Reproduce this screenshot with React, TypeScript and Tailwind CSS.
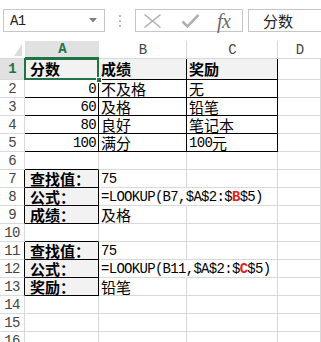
import React from "react";

const LAT = "font-['Liberation_Mono',monospace] text-[14px] leading-[16px] tracking-[-0.7px]";
const CJK = "font-['Noto_Sans_CJK_SC',sans-serif] text-[15px] leading-[16px]";

function Txt({ s }: { s: string }) {
  const parts = s.split(/([\x20-\x7e]+)/).filter((p) => p.length > 0);
  return (
    <>
      {parts.map((p, i) =>
        /^[\x20-\x7e]+$/.test(p) ? (
          <span key={i} className={LAT}>
            {p}
          </span>
        ) : (
          <span key={i} className={CJK}>
            {p}
          </span>
        )
      )}
    </>
  );
}

type Cell = {
  c?: React.ReactNode;
  right?: boolean;
  bold?: boolean;
  fill?: boolean;
  rb?: boolean;
  bb?: boolean;
  noR?: boolean;
  overflow?: boolean;
  sel?: boolean;
};

type Row = { n: number; h: string; hb?: boolean; cells: Cell[] };

const t = (s: string) => <Txt s={s} />;

const formula = (a: string, red: string, b: string) => (
  <>
    <span className={LAT}>{a}</span>
    <span className={LAT + " font-bold text-[#e02020]"}>{red}</span>
    <span className={LAT}>{b}</span>
  </>
);

const T = { rb: true, bb: true };

const rows: Row[] = [
  {
    n: 1,
    h: "h-[21px]",
    cells: [
      { c: t("分数"), bold: true, fill: true, ...T, sel: true },
      { c: t("成绩"), bold: true, fill: true, ...T },
      { c: t("奖励"), bold: true, fill: true, ...T },
      {},
    ],
  },
  { n: 2, h: "h-[18px]", cells: [{ c: t("0"), right: true, ...T }, { c: t("不及格"), ...T }, { c: t("无"), ...T }, {}] },
  { n: 3, h: "h-[18px]", cells: [{ c: t("60"), right: true, ...T }, { c: t("及格"), ...T }, { c: t("铅笔"), ...T }, {}] },
  { n: 4, h: "h-[18px]", cells: [{ c: t("80"), right: true, ...T }, { c: t("良好"), ...T }, { c: t("笔记本"), ...T }, {}] },
  { n: 5, h: "h-[18px]", cells: [{ c: t("100"), right: true, ...T }, { c: t("满分"), ...T }, { c: t("100元"), ...T }, {}] },
  { n: 6, h: "h-[18px]", cells: [{ bb: true }, {}, {}, {}] },
  { n: 7, h: "h-[18px]", hb: true, cells: [{ c: t("查找值："), bold: true, fill: true, ...T }, { c: t("75") }, {}, {}] },
  {
    n: 8,
    h: "h-[18px]",
    hb: true,
    cells: [{ c: t("公式："), bold: true, fill: true, ...T }, { c: formula("=LOOKUP(B7,$A$2:$", "B", "$5)"), noR: true, overflow: true }, {}, {}],
  },
  { n: 9, h: "h-[18px]", hb: true, cells: [{ c: t("成绩："), bold: true, fill: true, ...T }, { c: t("及格") }, {}, {}] },
  { n: 10, h: "h-[18px]", cells: [{ bb: true }, {}, {}, {}] },
  { n: 11, h: "h-[18px]", hb: true, cells: [{ c: t("查找值："), bold: true, fill: true, ...T }, { c: t("75") }, {}, {}] },
  {
    n: 12,
    h: "h-[18px]",
    hb: true,
    cells: [{ c: t("公式："), bold: true, fill: true, ...T }, { c: formula("=LOOKUP(B11,$A$2:$", "C", "$5)"), noR: true, overflow: true }, {}, {}],
  },
  { n: 13, h: "h-[18px]", hb: true, cells: [{ c: t("奖励："), bold: true, fill: true, ...T }, { c: t("铅笔") }, {}, {}] },
  { n: 14, h: "h-[18px]", cells: [{}, {}, {}, {}] },
  { n: 15, h: "h-[18px]", cells: [{}, {}, {}, {}] },
  { n: 16, h: "h-[18px]", cells: [{}, {}, {}, {}] },
];

const widths = ["w-[74px]", "w-[88px]", "w-[91px]", "w-[43px]"];

function CellView({ cell, col }: { cell: Cell; col: number }) {
  const cls = [
    "relative flex items-center shrink-0 border-r border-b whitespace-nowrap overflow-visible",
    widths[col],
    cell.noR ? "border-r-transparent" : cell.rb ? "border-r-black" : "border-r-[#d9d9d9]",
    cell.bb ? "border-b-black" : "border-b-[#d9d9d9]",
    cell.fill ? "bg-[#f2f2f2]" : "",
    cell.right ? "justify-end pr-[2px]" : col === 0 ? "pl-[5px]" : "pl-[2px]",
    cell.bold ? "font-bold" : "",
    cell.overflow ? "z-10" : "",
    "text-black",
  ].join(" ");
  return (
    <div className={cls}>
      {cell.c}
      {cell.sel && (
        <>
          <div className="absolute left-[-1px] top-[-1px] right-[-1px] bottom-[-1px] border-2 border-[#217346] z-20" />
          <div className="absolute right-[-4px] bottom-[-4px] w-[6px] h-[6px] bg-[#217346] border border-white z-30" />
        </>
      )}
    </div>
  );
}

export default function App() {
  return (
    <div className="w-[321px] h-[342px] overflow-hidden bg-white relative select-none">
      {/* Formula bar */}
      <div className="h-[41px] flex items-start pt-[9px]">
        <div className="ml-[3px] w-[102px] h-[23px] border border-[#c6c6c6] flex items-center justify-between pl-[6px] pr-[7px] shrink-0">
          <span className={LAT + " text-[#222]"}>A1</span>
          <svg width="8" height="5" viewBox="0 0 8 5">
            <polygon points="0,0 8,0 4,4.5" fill="#808080" />
          </svg>
        </div>
        <div className="w-[30px] h-[23px] flex flex-col items-center justify-center gap-[3px] shrink-0">
          <div className="w-[2px] h-[2px] bg-[#b8b8b8]" />
          <div className="w-[2px] h-[2px] bg-[#b8b8b8]" />
          <div className="w-[2px] h-[2px] bg-[#b8b8b8]" />
        </div>
        <div className="w-[108px] h-[23px] border border-[#c6c6c6] flex items-center shrink-0">
          <svg width="19" height="16" viewBox="0 0 19 16" className="ml-[7px]">
            <line x1="1.5" y1="1.5" x2="17.5" y2="14.5" stroke="#b0b0b0" strokeWidth="1.6" />
            <line x1="17.5" y1="1.5" x2="1.5" y2="14.5" stroke="#b0b0b0" strokeWidth="1.6" />
          </svg>
          <svg width="19" height="16" viewBox="0 0 19 16" className="ml-[19px]">
            <polyline points="1.5,8.5 6.5,13.5 17.5,2" fill="none" stroke="#b0b0b0" strokeWidth="2.6" />
          </svg>
          <span className="ml-[17px] font-['Liberation_Serif',serif] italic text-[20px] leading-none text-[#6b6b6b] tracking-[-0.5px]">
            fx
          </span>
        </div>
        <div className="ml-[5px] flex-1 h-[23px] border border-[#c6c6c6] border-r-0 flex items-center pl-[14px]">
          <span className={CJK + " text-[#222]"}>分数</span>
        </div>
      </div>

      {/* Column headers */}
      <div className="flex h-[18px]">
        <div className="w-[25px] shrink-0 border-b border-[#d9d9d9] relative">
          <svg width="8" height="12" viewBox="0 0 8 12" className="absolute right-[3px] bottom-[2px]">
            <polygon points="8,0 8,12 0,12" fill="#dcdcdc" />
          </svg>
        </div>
        <div className="w-[74px] shrink-0 bg-[#e1e1e1] border-b-2 border-[#217346] flex items-center justify-center">
          <span className={LAT + " font-bold text-[#217346]"}>A</span>
        </div>
        <div className="w-[88px] shrink-0 border-r border-b border-[#d9d9d9] flex items-center justify-center">
          <span className={LAT + " text-[#444]"}>B</span>
        </div>
        <div className="w-[91px] shrink-0 border-r border-b border-[#d9d9d9] flex items-center justify-center">
          <span className={LAT + " text-[#444]"}>C</span>
        </div>
        <div className="w-[43px] shrink-0 border-b border-[#d9d9d9] flex items-center justify-center">
          <span className={LAT + " text-[#444]"}>D</span>
        </div>
      </div>

      {/* Rows */}
      {rows.map((r) => (
        <div key={r.n} className={"flex " + r.h}>
          <div
            className={[
              "w-[25px] shrink-0 border-r border-b border-b-[#d9d9d9] flex items-center justify-center",
              r.hb ? "border-r-black" : r.n === 1 ? "border-r-[#217346]" : "border-r-[#d9d9d9]",
              r.n === 1 ? "bg-[#e1e1e1]" : "bg-white",
            ].join(" ")}
          >
            <span className={LAT + (r.n === 1 ? " font-bold text-[#217346]" : " text-[#444]")}>{r.n}</span>
          </div>
          {r.cells.map((c, i) => (
            <CellView key={i} cell={c} col={i} />
          ))}
        </div>
      ))}
    </div>
  );
}
